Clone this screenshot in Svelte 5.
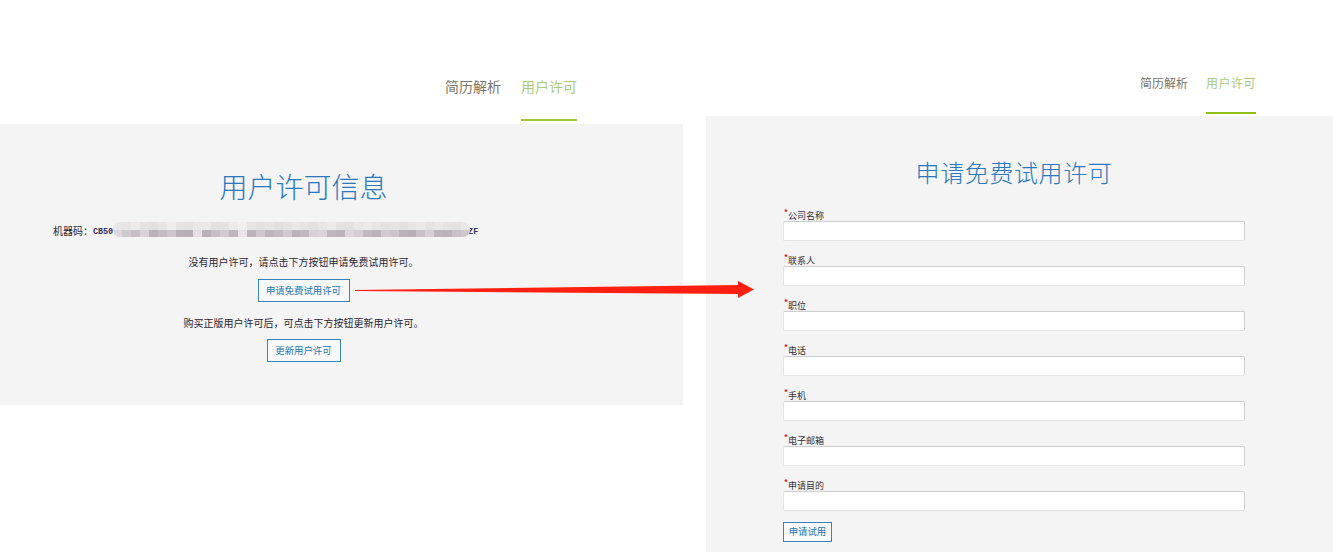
<script>
    const fields = ['公司名称', '联系人', '职位', '电话', '手机', '电子邮箱', '申请目的'];

    // mosaic that hides the machine code
    const topShades = [232, 230, 236, 228, 226, 231, 238, 229, 227, 232, 234, 226, 228, 236, 240, 230, 226, 229, 225, 228, 233, 229, 226, 231, 236, 228, 226, 232, 235, 230, 227, 229, 226, 231, 235, 228, 233, 229, 227, 232];
    const lowShades = [222, 208, 198, 216, 186, 196, 205, 184, 182, 230, 184, 198, 210, 190, 234, 186, 206, 188, 194, 208, 186, 192, 216, 218, 190, 186, 220, 212, 192, 186, 208, 204, 186, 182, 200, 214, 188, 186, 200, 206];
</script>

<div class="page">
    <section class="left">
        <nav class="nav">
            <a href="#a" class="nav-link">简历解析</a>
            <a href="#b" class="nav-link active">用户许可</a>
        </nav>
        <div class="panel">
            <h1>用户许可信息</h1>
            <div class="code">
                <span>机器码：</span><span class="latin">CB50</span>
                <span class="mosaic">
                    <span class="cells">
                        {#each topShades as s}
                            <i style="background: rgb({s}, {s - 2}, {s - 1})"></i>
                        {/each}
                    </span>
                    <span class="cells">
                        {#each lowShades as s}
                            <i style="background: rgb({s}, {s - 6}, {s - 2})"></i>
                        {/each}
                    </span>
                </span>
                <span class="latin">ZF</span>
            </div>
            <p class="first">没有用户许可，请点击下方按钮申请免费试用许可。</p>
            <button class="btn apply">申请免费试用许可</button>
            <p class="second">购买正版用户许可后，可点击下方按钮更新用户许可。</p>
            <button class="btn update">更新用户许可</button>
        </div>
    </section>

    <section class="right">
        <nav class="nav small">
            <a href="#a" class="nav-link">简历解析</a>
            <a href="#b" class="nav-link active">用户许可</a>
        </nav>
        <div class="panel form-panel">
            <h2>申请免费试用许可</h2>
            <form>
                {#each fields as f}
                    <div class="field">
                        <label><span class="star">*</span>{f}</label>
                        <input type="text" />
                    </div>
                {/each}
                <button type="button" class="btn submit">申请试用</button>
            </form>
        </div>
    </section>

    <svg class="arrow" width="420" height="30" viewBox="0 0 420 30">
        <polygon points="0,11 383,6 383,2 399,10.5 383,19 383,15 0,12" fill="#ff2012" />
    </svg>
</div>

<style>
    :global(body) {
        margin: 0;
        background: #fff;
        font-family: "Noto Sans CJK SC", "Liberation Sans", sans-serif;
    }

    .page {
        position: relative;
        display: flex;
        align-items: flex-start;
        width: 1333px;
        height: 555px;
        overflow: hidden;
    }

    .left {
        width: 683px;
    }

    .right {
        width: 627px;
        margin-left: 23px;
    }

    .nav {
        display: flex;
        justify-content: flex-end;
        gap: 20px;
        height: 124px;
        padding-right: 106px;
        box-sizing: border-box;
    }

    .nav.small {
        gap: 18px;
        height: 116px;
        padding-right: 77px;
    }

    .nav-link {
        display: block;
        box-sizing: border-box;
        height: 121px;
        padding-top: 76px;
        font-size: 14px;
        line-height: 20px;
        color: #7a7468;
        text-decoration: none;
    }

    .nav.small .nav-link {
        height: 114px;
        padding-top: 74px;
        font-size: 12px;
        line-height: 18px;
    }

    .nav-link.active {
        color: #a9c97a;
        border-bottom: 2px solid #a2c43c;
    }

    .nav.small .nav-link.active {
        width: 50px;
        letter-spacing: 0.5px;
        border-bottom-color: #8fbe14;
    }

    .panel {
        background: #f4f4f4;
        height: 281px;
        box-sizing: border-box;
        padding: 43px 76px 0 0;
        text-align: center;
        font-size: 10px;
        color: #2a2430;
    }

    h1 {
        margin: 0;
        font-size: 28px;
        line-height: 38px;
        font-weight: 300;
        color: #2a78bd;
    }

    .code {
        display: flex;
        align-items: center;
        height: 16px;
        margin: 18px 0 0 53px;
        text-align: left;
        line-height: 16px;
    }

    .latin {
        padding-top: 2px;
        font-family: "Liberation Mono", monospace;
        font-size: 8.4px;
        font-weight: bold;
        color: #33305a;
    }

    .mosaic {
        position: relative;
        display: flex;
        flex-direction: column;
        flex: none;
        align-self: flex-start;
        width: 357px;
        height: 15px;
        margin: -1px -2px 0 0;
        overflow: hidden;
        border-radius: 7px;
        background: #e4e2e3;
    }

    .cells {
        display: flex;
        flex: 1;
    }

    .cells i {
        flex: 1;
    }

    p {
        margin: 0;
        line-height: 14px;
    }

    .first {
        margin-top: 16px;
    }

    .second {
        margin-top: 14px;
    }

    .btn {
        display: block;
        box-sizing: border-box;
        margin: 0 auto;
        padding: 0 0 2px;
        border: 1px solid #3584bc;
        background: #f8f8f8;
        color: #2275ad;
        font-family: inherit;
        font-size: 9.4px;
    }

    .apply {
        width: 92px;
        height: 23px;
        margin-top: 10px;
    }

    .update {
        width: 74px;
        height: 23px;
        margin-top: 9px;
    }

    .form-panel {
        height: 436px;
        padding: 41px 88px 0 77px;
    }

    h2 {
        margin: 0;
        font-size: 24px;
        line-height: 30px;
        font-weight: 300;
        letter-spacing: 0.6px;
        color: #2a78bd;
    }

    form {
        margin-top: 20px;
        text-align: left;
    }

    .field {
        height: 45px;
    }

    label {
        display: block;
        height: 14px;
        line-height: 18px;
        font-size: 9px;
        color: #332f36;
        padding-left: 1px;
    }

    .star {
        position: relative;
        top: -4px;
        color: #e01010;
        font-size: 8px;
        line-height: 8px;
        font-weight: bold;
    }

    input {
        display: block;
        box-sizing: border-box;
        width: 462px;
        height: 20px;
        padding: 0;
        background: #fff;
        border: 1px solid #e4e4e4;
        border-top-color: #cdcdcd;
        border-right-color: #cdcdcd;
        border-radius: 2px;
        outline: none;
    }

    .submit {
        width: 49px;
        height: 20px;
        margin: 0;
    }

    /* red arrow drawn over both columns */
    .arrow {
        position: absolute;
        left: 355px;
        top: 279px;
    }
</style>
